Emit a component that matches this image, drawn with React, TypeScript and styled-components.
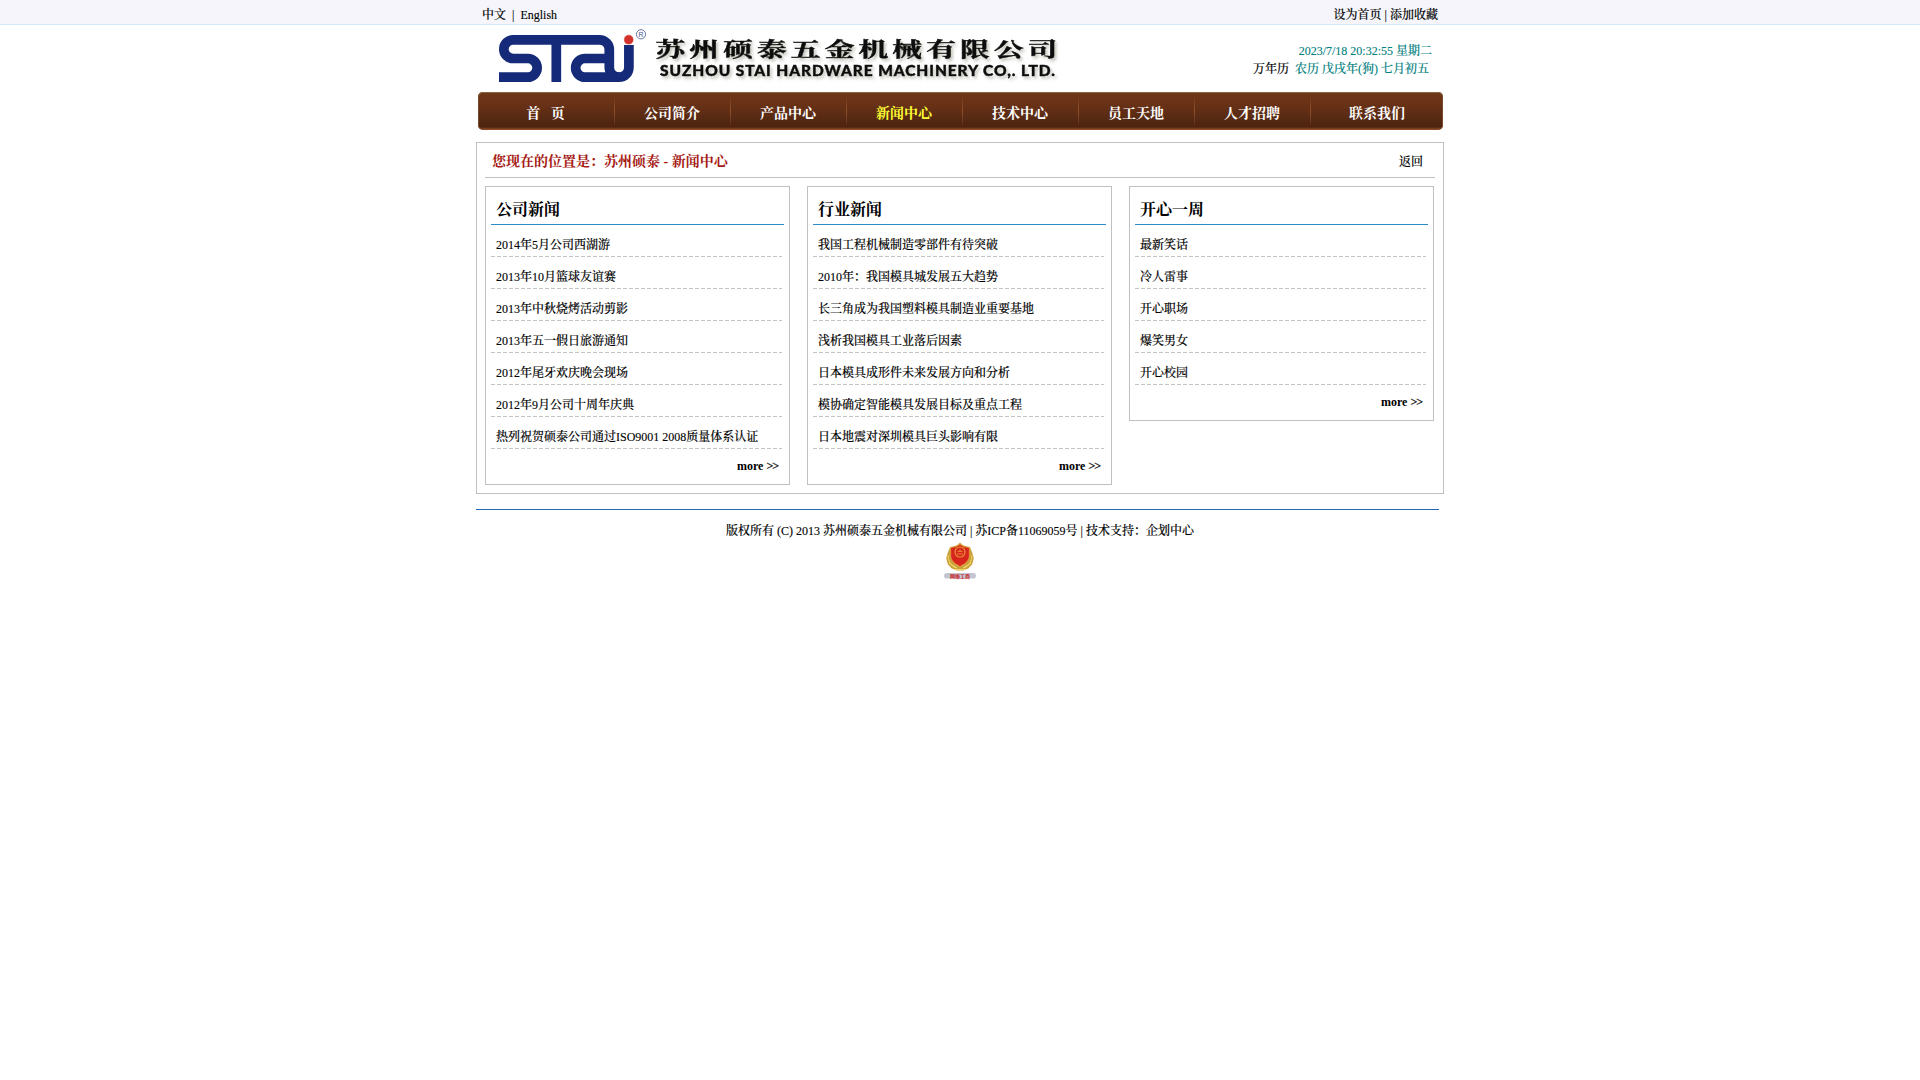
import React from 'react';
import styled, { createGlobalStyle } from 'styled-components';

const GlobalStyle = createGlobalStyle`
  *, *::before, *::after { box-sizing: border-box; }
  body {
    margin: 0;
    background: #fff;
    color: #000;
    font: 500 12px/18px "Liberation Serif", "Noto Serif CJK SC", "Noto Sans CJK SC", serif;
    -webkit-text-stroke: 0.12px currentColor;
  }
  a { color: inherit; text-decoration: none; }
  ul { list-style: none; margin: 0; padding: 0; }
`;

const TopBar = styled.div`
  height: 25px;
  background: #f5f5fb;
  border-bottom: 1px solid #d3e8f8;
`;

const Wrap = styled.div`
  width: 968px;
  margin: 0 auto;
`;

const TopRow = styled(Wrap)`
  display: flex;
  justify-content: space-between;
  padding: 6px 6px 0;
  white-space: pre;
`;

const Header = styled(Wrap)`
  display: flex;
  justify-content: space-between;
  height: 67px;
`;

const Brand = styled.svg`
  width: 600px;
  height: 67px;
  display: block;
`;

const Clock = styled.div`
  padding: 17px 12px 0 0;
  text-align: right;
  color: #008080;
  white-space: pre;
`;

const Lunar = styled.div`
  padding-right: 3px;
  span { color: #000; }
`;

const Nav = styled.nav`
  display: flex;
  width: 965px;
  height: 38px;
  margin: 0 1px 0 2px;
  padding-top: 1px;
  border-radius: 5px;
  background: linear-gradient(#713619, #6a3217 30%, #4c2410 92%, #8a4824 98%);
  box-shadow: inset 0 1px 0 #85683c, inset 1px 0 0 #7a4a2c, inset -1px 0 0 #7a4a2c;
  -webkit-text-stroke: 0;
`;

const NavItem = styled.a<{ $w: number; $active?: boolean }>`
  flex: 0 0 ${p => p.$w}px;
  margin: 4px 0 5px;
  padding-right: 1px;
  border-right: 1px solid;
  border-image: linear-gradient(#6f361a, #93502a 50%, #5c2c14) 1;
  font-size: 14px;
  line-height: 33px;
  font-weight: bold;
  text-align: center;
  white-space: pre;
  color: ${p => (p.$active ? '#ffff33' : '#fff')};
  &:last-child { border-right: 0; padding-right: 0; }
`;

const Main = styled.main`
  height: 352px;
  margin-top: 12px;
  padding: 0 8px;
  border: 1px solid #c0c0c0;
`;

const Crumb = styled.div`
  display: flex;
  justify-content: space-between;
  width: 950px;
  height: 35px;
  padding: 0 12px 0 7px;
  border-bottom: 1px solid #c0c0c0;
  line-height: 38px;
`;

const CrumbPath = styled.div`
  font-size: 14px;
  font-weight: bold;
  color: #a61b14;
  -webkit-text-stroke: 0;
`;

const Columns = styled.div`
  display: flex;
  align-items: flex-start;
  gap: 17px;
  padding-top: 8px;
`;

const Card = styled.section`
  width: 305px;
  padding: 0 5px 9px;
  border: 1px solid #c0c0c0;
`;

const CardTitle = styled.h2`
  margin: 0;
  height: 38px;
  padding-left: 5px;
  border-bottom: 1px solid #2e8bcb;
  font-size: 16px;
  line-height: 45px;
  -webkit-text-stroke: 0;
`;

const Item = styled.li`
  height: 32px;
  margin-right: 2px;
  padding-left: 5px;
  line-height: 41px;
  background: repeating-linear-gradient(90deg, #c4c4c4 0 4px, transparent 4px 6px) left bottom / 100% 1px no-repeat;
`;

const More = styled.div`
  height: 26px;
  padding-right: 5px;
  text-align: right;
  font-weight: bold;
  line-height: 35px;
  -webkit-text-stroke: 0;
  span { font-weight: normal; letter-spacing: -1px; margin-right: 1px; -webkit-text-stroke: 0.3px currentColor; }
`;

const Footer = styled.footer`
  display: flex;
  flex-direction: column;
  align-items: center;
  margin-top: 15px;
  padding-top: 12px;
  background: linear-gradient(#2468b8, #2468b8) left top / 963px 1px no-repeat;
  line-height: 20px;
`;

const Badge = styled.svg`
  width: 34px;
  height: 38px;
  margin-top: 1px;
`;

const nav = [
  { label: '首   页', w: 137 },
  { label: '公司简介', w: 116 },
  { label: '产品中心', w: 116 },
  { label: '新闻中心', w: 116, active: true },
  { label: '技术中心', w: 116 },
  { label: '员工天地', w: 116 },
  { label: '人才招聘', w: 116 },
  { label: '联系我们', w: 132 },
];

const sections = [
  {
    title: '公司新闻',
    items: [
      '2014年5月公司西湖游',
      '2013年10月篮球友谊赛',
      '2013年中秋烧烤活动剪影',
      '2013年五一假日旅游通知',
      '2012年尾牙欢庆晚会现场',
      '2012年9月公司十周年庆典',
      '热列祝贺硕泰公司通过ISO9001 2008质量体系认证',
    ],
  },
  {
    title: '行业新闻',
    items: [
      '我国工程机械制造零部件有待突破',
      '2010年：我国模具城发展五大趋势',
      '长三角成为我国塑料模具制造业重要基地',
      '浅析我国模具工业落后因素',
      '日本模具成形件未来发展方向和分析',
      '模协确定智能模具发展目标及重点工程',
      '日本地震对深圳模具巨头影响有限',
    ],
  },
  {
    title: '开心一周',
    items: ['最新笑话', '冷人雷事', '开心职场', '爆笑男女', '开心校园'],
  },
];

function Logo() {
  return (
    <Brand viewBox="0 0 600 67">
      <defs>
        <filter id="soft" x="-5%" y="-20%" width="110%" height="160%">
          <feDropShadow dx="2" dy="2.5" stdDeviation="1.6" floodColor="#8a8a7c" floodOpacity="0.5" />
        </filter>
      </defs>
      <g fill="none" stroke="#152a78" strokeWidth="9.7">
        <path d="M23 52.2H51.8a9.35 9.35 0 0 0 0-18.7H37.2a9.35 9.35 0 0 1 0-18.7H123.5a9.8 9.8 0 0 1 9.8 9.8V42.4a9.8 9.8 0 0 0 19.6 0V20" />
        <path d="M80.3 15V57" />
        <path d="M131 33.5H109a9.35 9.35 0 0 0 0 18.7H143" />
      </g>
      <circle cx="152.7" cy="14.7" r="4.9" fill="#d3312b" stroke="#fff" strokeWidth="0.5" />
      <circle cx="165" cy="9.3" r="4.6" fill="none" stroke="#4a5794" strokeWidth="0.8" />
      <text x="165" y="11.9" fontSize="7" textAnchor="middle" fill="#4a5794" fontFamily="Liberation Sans, sans-serif">R</text>
      <g filter="url(#soft)" fill="#0a0a0a" stroke="#0a0a0a" strokeWidth="0.5">
        <text transform="translate(179.5 32) scale(1.45 1)" fontSize="20.5" fontWeight="700" letterSpacing="2.85" fontFamily="Noto Serif CJK SC, Noto Sans CJK SC, sans-serif">
          苏州硕泰五金机械有限公司
        </text>
        <text x="184" y="51" fontSize="15.5" fontWeight="900" textLength="395" fontFamily="Lato, sans-serif">
          SUZHOU STAI HARDWARE MACHINERY CO,. LTD.
        </text>
      </g>
    </Brand>
  );
}

function Seal() {
  return (
    <Badge viewBox="0 0 34 38">
      <path d="M17 0.6l3 2.6 7 2 2.4 6 1.4 5-1.6 6-3.6 4-5.2 2.4h-6.8l-5.2-2.4-3.6-4-1.6-6 1.4-5 2.4-6 7-2z" fill="#c9a136" />
      <path d="M5 13q0 10 8 13M29 13q0 10-8 13M6 21l8 5M28 21l-8 5M11 27.5h12" stroke="#f0d670" fill="none" />
      <path d="M17 2.5q4 3 9.300 3v8.5q0 6-9.300 10.500Q7.700 20 7.700 14V5.500q5.300 0 9.300-3z" fill="#d8241c" stroke="#f0c04a" strokeWidth="0.5" />
      <circle cx="17" cy="10" r="5" fill="none" stroke="#e59a3a" strokeWidth="1.1" />
      <path d="M14.5 9.5h5M14 12h6M17 7v2.5" stroke="#e59a3a" strokeWidth="0.8" />
      <rect x="1" y="31" width="32" height="5.6" rx="2.8" fill="#c3c5d2" />
      <text x="17" y="35.7" fontSize="5" fontWeight="700" textAnchor="middle" fill="#c81e1e" fontFamily="Noto Sans CJK SC, sans-serif">网络工商</text>
    </Badge>
  );
}

export default function App() {
  return (
    <>
      <GlobalStyle />
      <TopBar>
        <TopRow>
          <div><a href="#">中文</a>{'  |  '}<a href="#">English</a></div>
          <div><a href="#">设为首页</a> | <a href="#">添加收藏</a></div>
        </TopRow>
      </TopBar>
      <Header>
        <Logo />
        <Clock>
          <div>2023/7/18 20:32:55 星期二</div>
          <Lunar><span>万年历</span>{'  '}农历 戊戌年(狗) 七月初五</Lunar>
        </Clock>
      </Header>
      <Wrap>
        <Nav>
          {nav.map(n => (
            <NavItem key={n.label} href="#" $w={n.w} $active={n.active}>{n.label}</NavItem>
          ))}
        </Nav>
        <Main>
          <Crumb>
            <CrumbPath>您现在的位置是：苏州硕泰 - 新闻中心</CrumbPath>
            <a href="#">返回</a>
          </Crumb>
          <Columns>
            {sections.map(s => (
              <Card key={s.title}>
                <CardTitle>{s.title}</CardTitle>
                <ul>
                  {s.items.map(t => <Item key={t}><a href="#">{t}</a></Item>)}
                </ul>
                <More><a href="#">more <span>&gt;&gt;</span></a></More>
              </Card>
            ))}
          </Columns>
        </Main>
        <Footer>
          <div>版权所有 (C) 2013 苏州硕泰五金机械有限公司 | 苏ICP备11069059号 | 技术支持：企划中心</div>
          <Seal />
        </Footer>
      </Wrap>
    </>
  );
}
